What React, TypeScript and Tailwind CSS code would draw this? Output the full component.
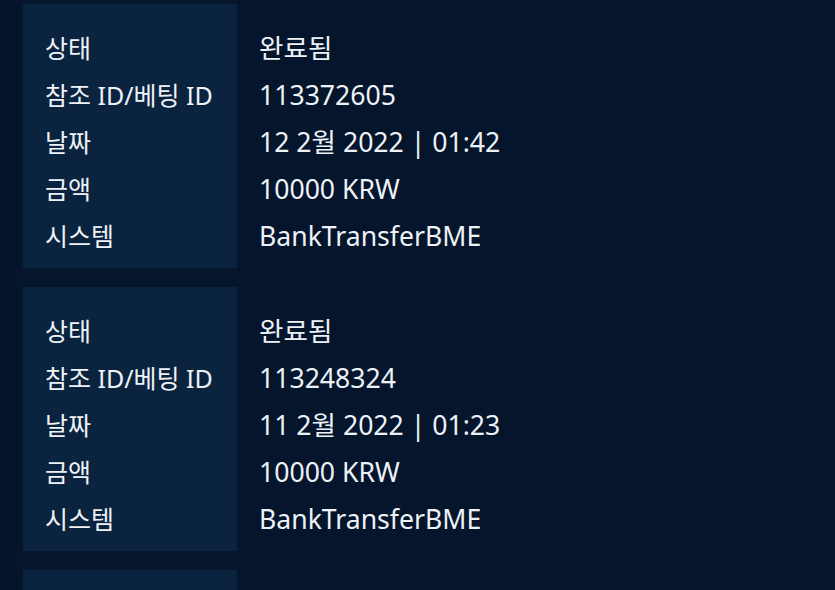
import React from "react";

const records = [
  { status: "완료됨", ref: "113372605", date: "12 2월 2022 | 01:42", amount: "10000 KRW", system: "BankTransferBME" },
  { status: "완료됨", ref: "113248324", date: "11 2월 2022 | 01:23", amount: "10000 KRW", system: "BankTransferBME" },
];

const labels = ["상태", "참조 ID/베팅 ID", "날짜", "금액", "시스템"];

export default function App() {
  return (
    <div
      className="w-[835px] h-[590px] overflow-hidden bg-[#04152c] flex text-[#eef2f7]"
      style={{ fontFamily: '"Noto Sans", "Noto Sans CJK KR", sans-serif' }}
    >
      <div className="w-[18px] shrink-0 bg-[#061429]" />
      <div className="flex flex-col gap-[19px] pl-[5px] pt-[4px]">
        {records.map((r, i) => {
          const vals = [r.status, r.ref, r.date, r.amount, r.system];
          return (
            <div key={i} className="flex h-[264px] shrink-0">
              <div className="w-[214px] bg-[#0a2440] pl-[22px] pt-[21px] flex flex-col">
                {labels.map((l) => (
                  <div key={l} className="h-[47px] flex items-center text-[25px] leading-none whitespace-nowrap">
                    {l}
                  </div>
                ))}
              </div>
              <div className="pl-[22px] pt-[21px] flex flex-col">
                {vals.map((v, j) => (
                  <div key={j} className="h-[47px] flex items-center text-[26.6px] leading-none whitespace-nowrap">
                    {v}
                  </div>
                ))}
              </div>
            </div>
          );
        })}
        <div className="w-[214px] h-[264px] shrink-0 bg-[#0a2440]" />
      </div>
    </div>
  );
}
